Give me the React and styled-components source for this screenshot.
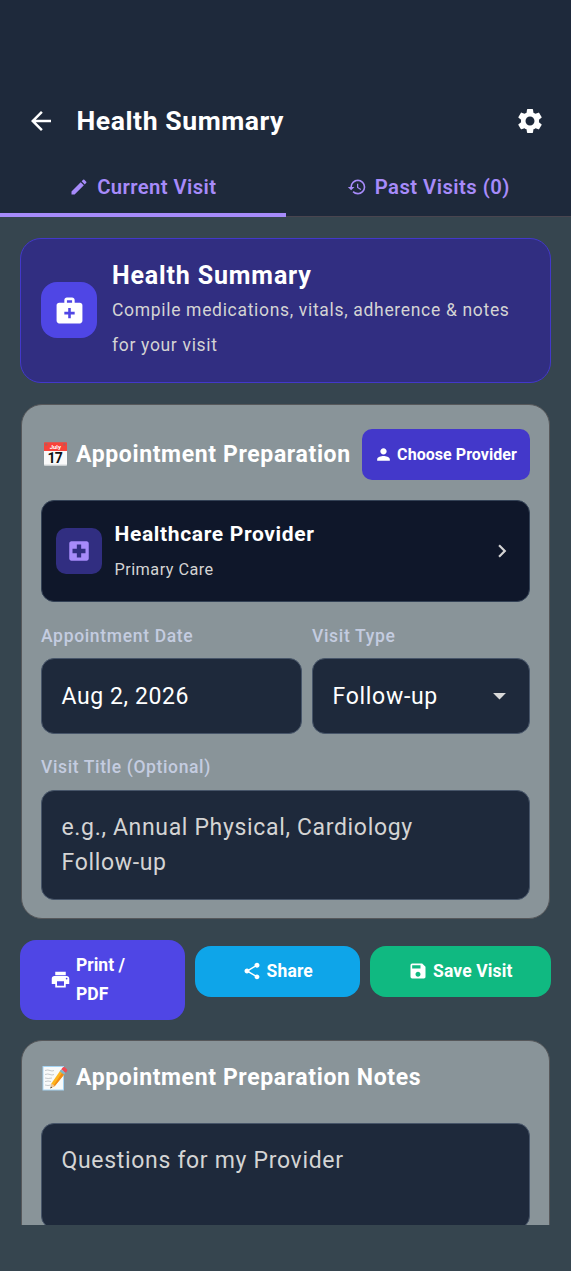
import React from "react";
import styled, { createGlobalStyle } from "styled-components";
import {
  MdArrowBack, MdSettings, MdEdit, MdHistory, MdMedicalServices, MdPerson,
  MdLocalHospital, MdChevronRight, MdArrowDropDown, MdPrint, MdShare, MdSave,
} from "react-icons/md";

const Global = createGlobalStyle`
  * { box-sizing: border-box; }
  body { margin: 0; background: #36454f; font-family: Roboto, "Liberation Sans", sans-serif; color: #fff; }
  svg { display: block; flex: none; }
`;

const Screen = styled.div`
  width: 571px;
  height: 1271px;
  display: flex;
  flex-direction: column;
  overflow: hidden;
  background: #36454f;
  padding-bottom: 46px;
`;

const Header = styled.header`
  flex: none;
  height: 217px;
  padding-top: 84px;
  background: #1e293b;
  border-bottom: 1px solid #49454f;
`;

const TitleBar = styled.div`
  height: 74px;
  display: flex;
  align-items: center;
  padding: 0 26px 0 26px;
`;

const Text = styled.span`
  display: block;
  white-space: nowrap;
  font-size: ${(p) => p.$size}px;
  font-weight: ${(p) => p.$weight || 400};
  letter-spacing: ${(p) => p.$track || 0}px;
  line-height: ${(p) => p.$line || 30}px;
  color: ${(p) => p.$color || "#fff"};
`;

const PageTitle = styled(Text)`
  flex: 1;
  margin-left: 20.5px;
`;

const Tabs = styled.div`
  display: flex;
  height: 59px;
`;

const Tab = styled.div`
  flex: 1;
  display: flex;
  align-items: center;
  justify-content: center;
  gap: 8px;
  color: #a78bfa;
  border-bottom: 4px solid ${(p) => (p.$active ? "#a78bfa" : "transparent")};
  padding-top: 3px;
`;

const Content = styled.main`
  flex: 1;
  min-height: 0;
  overflow: hidden;
  padding: 21px 20px 0;
`;

const Hero = styled.section`
  height: 145px;
  display: flex;
  align-items: center;
  gap: 15px;
  padding: 0 20px 1px;
  border: 1.5px solid #4338ca;
  border-radius: 21px;
  background: #312e81;
`;

const IconTile = styled.div`
  width: ${(p) => p.$size}px;
  height: ${(p) => p.$size}px;
  border-radius: ${(p) => p.$radius}px;
  background: ${(p) => p.$bg};
  color: ${(p) => p.$color};
  display: flex;
  align-items: center;
  justify-content: center;
  flex: none;
`;

const Card = styled.section`
  margin: ${(p) => p.$top}px 0 0 1px;
  width: 529px;
  height: ${(p) => p.$height}px;
  padding: 24px 19px 0;
  border: 1px solid #56585b;
  border-radius: 21px;
  background: #899499;
`;

const CardHead = styled.div`
  height: ${(p) => p.$height}px;
  display: flex;
  align-items: center;
`;

const CardTitle = styled(Text)`
  flex: 1;
  margin-left: 8px;
`;

const ChooseButton = styled.button`
  width: 168.5px;
  height: 51px;
  padding: 0 1px 0 0;
  border: 0;
  border-radius: 10px;
  background: #4338ca;
  color: #fff;
  font-family: inherit;
  display: flex;
  align-items: center;
  justify-content: center;
  gap: 4.5px;
`;

const Provider = styled.div`
  height: 102px;
  margin-top: 20px;
  padding: 0 14px 0 14px;
  border: 1px solid #334155;
  border-radius: 13px;
  background: #0f172a;
  display: flex;
  align-items: center;
  gap: 12.5px;
  color: #d4d4d4;
`;

const ProviderInfo = styled.div`
  flex: 1;
  padding-top: 2px;
`;

const FieldRow = styled.div`
  display: grid;
  grid-template-columns: 261px 218px;
  column-gap: 10px;
`;

const Label = styled(Text)`
  margin-top: ${(p) => p.$top}px;
`;

const Field = styled.div`
  height: ${(p) => p.$height}px;
  margin-top: ${(p) => p.$top}px;
  padding: ${(p) => p.$padTop}px 14px 0 19.5px;
  border: 1px solid #475569;
  border-radius: 13px;
  background: #1e293b;
  display: flex;
  align-items: flex-start;
  justify-content: space-between;
  color: #d9d9d9;
`;

const Arrow = styled(MdArrowDropDown)`
  margin-top: -2px;
`;

const Actions = styled.div`
  display: grid;
  grid-template-columns: 165px 164.5px 181.5px;
  column-gap: 10px;
  align-items: start;
  margin-top: 21px;
`;

const Action = styled.button`
  height: ${(p) => p.$height}px;
  margin-top: ${(p) => p.$top || 0}px;
  padding: ${(p) => p.$pad || "0"};
  border: 0;
  border-radius: 16px;
  background: ${(p) => p.$bg};
  color: #fff;
  font-family: inherit;
  text-align: left;
  display: flex;
  align-items: center;
  justify-content: ${(p) => (p.$start ? "flex-start" : "center")};
  gap: 5px;
`;

const Calendar = () => (
  <svg width="27" height="27" viewBox="0 0 27 27">
    <path d="M3 8h23v15.700a.8.8 0 0 1-.8.8H3.800a.8.8 0 0 1-.8-.8z" fill="#fafafa" />
    <path d="M3 23.500h23v.3a.7.700 0 0 1-.7.7H3.700a.7.700 0 0 1-.7-.7z" fill="#d5d9db" />
    <path d="M3.800 1.200h21.400a.8.8 0 0 1 .8.8V10H3V2a.8.8 0 0 1 .8-.8z" fill="#f8433a" />
    <circle cx="5.200" cy="3.500" r="1.300" fill="#a9605f" />
    <circle cx="23.300" cy="3.500" r="1.300" fill="#a9605f" />
    <text x="14.300" y="7.900" textAnchor="middle" fontFamily="Roboto, sans-serif" fontWeight="700" fontSize="6" fill="#fff">July</text>
    <text x="13.700" y="22" textAnchor="middle" fontFamily="Roboto, sans-serif" fontWeight="700" fontSize="14" letterSpacing="-.9" fill="#111">17</text>
  </svg>
);

const Memo = () => (
  <svg width="27" height="27" viewBox="0 0 27 27">
    <path d="M1.500 1h21.500v24.500H1.500z" fill="#a5d4f3" />
    <path d="M2.500 2h19.500V24.500H2.500z" fill="#f8fafa" />
    <path d="M4 5.500q3-1 5 0t4 0M4 9.500q3-1 5 0t4 0M4 13q3 1 7 0M4 16.500q3-1 6 0M4 20q3 1 6 0" fill="none" stroke="#b8bdc0" strokeWidth=".8" />
    <path d="M19.500 5.200l4.300 3.500-10 12.200-4.200 2.300.8-4.700z" fill="#fdb51e" />
    <path d="M21.500 7l2.300 1.700-10 12.200-2 .9z" fill="#f28b16" />
    <path d="M10.400 18.500l3.400 2.400-4.200 2.300z" fill="#efc79b" />
    <path d="M9.900 21.500l1.200 1-1.800 1z" fill="#333" />
    <path d="M18.600 6.300l1.700-2.100 4.400 3.500-1.700 2.100z" fill="#82b5c6" />
    <path d="M20.300 4.200l1-1.300c.8-1 2-1 3-.2l1.200 1c1 .8 1 1.900.3 2.800l-1.100 1.200z" fill="#ef4b55" />
  </svg>
);

export default function App() {
  return (
    <>
      <Global />
      <Screen>
        <Header>
          <TitleBar>
            <MdArrowBack size={30} />
            <PageTitle $size={26.6} $weight={700} $track={0.55}>Health Summary</PageTitle>
            <MdSettings size={30} />
          </TitleBar>
          <Tabs>
            <Tab $active>
              <MdEdit size={20} />
              <Text $size={20.3} $weight={600} $track={0.4} $color="#a78bfa">Current Visit</Text>
            </Tab>
            <Tab>
              <MdHistory size={20} />
              <Text $size={20.3} $weight={600} $track={0.45} $color="#a78bfa">Past Visits (0)</Text>
            </Tab>
          </Tabs>
        </Header>
        <Content>
          <Hero>
            <IconTile $size={56} $radius={16} $bg="#4f46e5" $color="#fff">
              <MdMedicalServices size={31} />
            </IconTile>
            <div>
              <Text $size={25} $weight={700} $track={0.85} $line={35}>Health Summary</Text>
              <Text $size={17.5} $track={0.68} $line={35} $color="#d4d4d4">Compile medications, vitals, adherence &amp; notes</Text>
              <Text $size={17.5} $track={0.68} $line={35} $color="#d4d4d4">for your visit</Text>
            </div>
          </Hero>

          <Card $top={21} $height={515}>
            <CardHead $height={51}>
              <Calendar />
              <CardTitle $size={23} $weight={700} $track={0.63}>Appointment Preparation</CardTitle>
              <ChooseButton>
                <MdPerson size={19} />
                <Text $size={16} $weight={700} $track={0.05}>Choose Provider</Text>
              </ChooseButton>
            </CardHead>
            <Provider>
              <IconTile $size={46} $radius={10} $bg="#312e81" $color="#a78bfa">
                <MdLocalHospital size={26} />
              </IconTile>
              <ProviderInfo>
                <Text $size={21} $weight={700} $track={0.65} $line={35}>Healthcare Provider</Text>
                <Text $size={16.3} $track={0.45} $line={35} $color="#d4d4d4">Primary Care</Text>
              </ProviderInfo>
              <MdChevronRight size={26} />
            </Provider>
            <FieldRow>
              <div>
                <Label $top={19} $size={17.5} $weight={500} $track={0.67} $color="#c4cce0">Appointment Date</Label>
                <Field $top={7} $height={76} $padTop={23}>
                  <Text $size={23} $track={0.6}>Aug 2, 2026</Text>
                </Field>
              </div>
              <div>
                <Label $top={19} $size={17.5} $weight={500} $track={0.67} $color="#c4cce0">Visit Type</Label>
                <Field $top={7} $height={76} $padTop={23}>
                  <Text $size={23} $track={0.7}>Follow-up</Text>
                  <Arrow size={31} />
                </Field>
              </div>
            </FieldRow>
            <Label $top={18} $size={17.5} $weight={500} $track={0.63} $color="#c4cce0">Visit Title (Optional)</Label>
            <Field $top={7.5} $height={110} $padTop={19.5}>
              <Text $size={23} $track={0.66} $line={35} $color="#d4d4d4">
                e.g., Annual Physical, Cardiology<br />Follow-up
              </Text>
            </Field>
          </Card>

          <Actions>
            <Action $height={79.5} $bg="#4f46e5" $start $pad="0 0 0 30px">
              <MdPrint size={21} />
              <Text $size={17.5} $weight={700} $line={29}>Print /<br />PDF</Text>
            </Action>
            <Action $height={51} $top={5.5} $bg="#0ea5e9">
              <MdShare size={20} />
              <Text $size={17.5} $weight={700} $track={0.15}>Share</Text>
            </Action>
            <Action $height={51} $top={5.5} $bg="#10b981">
              <MdSave size={20} />
              <Text $size={17.5} $weight={700} $track={0.12}>Save Visit</Text>
            </Action>
          </Actions>

          <Card $top={20.5} $height={400}>
            <CardHead $height={26}>
              <Memo />
              <CardTitle $size={23} $weight={700} $track={0.62}>Appointment Preparation Notes</CardTitle>
            </CardHead>
            <Field $top={31.5} $height={106} $padTop={22}>
              <Text $size={23} $track={0.68} $color="#d4d4d4">Questions for my Provider</Text>
            </Field>
          </Card>
        </Content>
      </Screen>
    </>
  );
}
